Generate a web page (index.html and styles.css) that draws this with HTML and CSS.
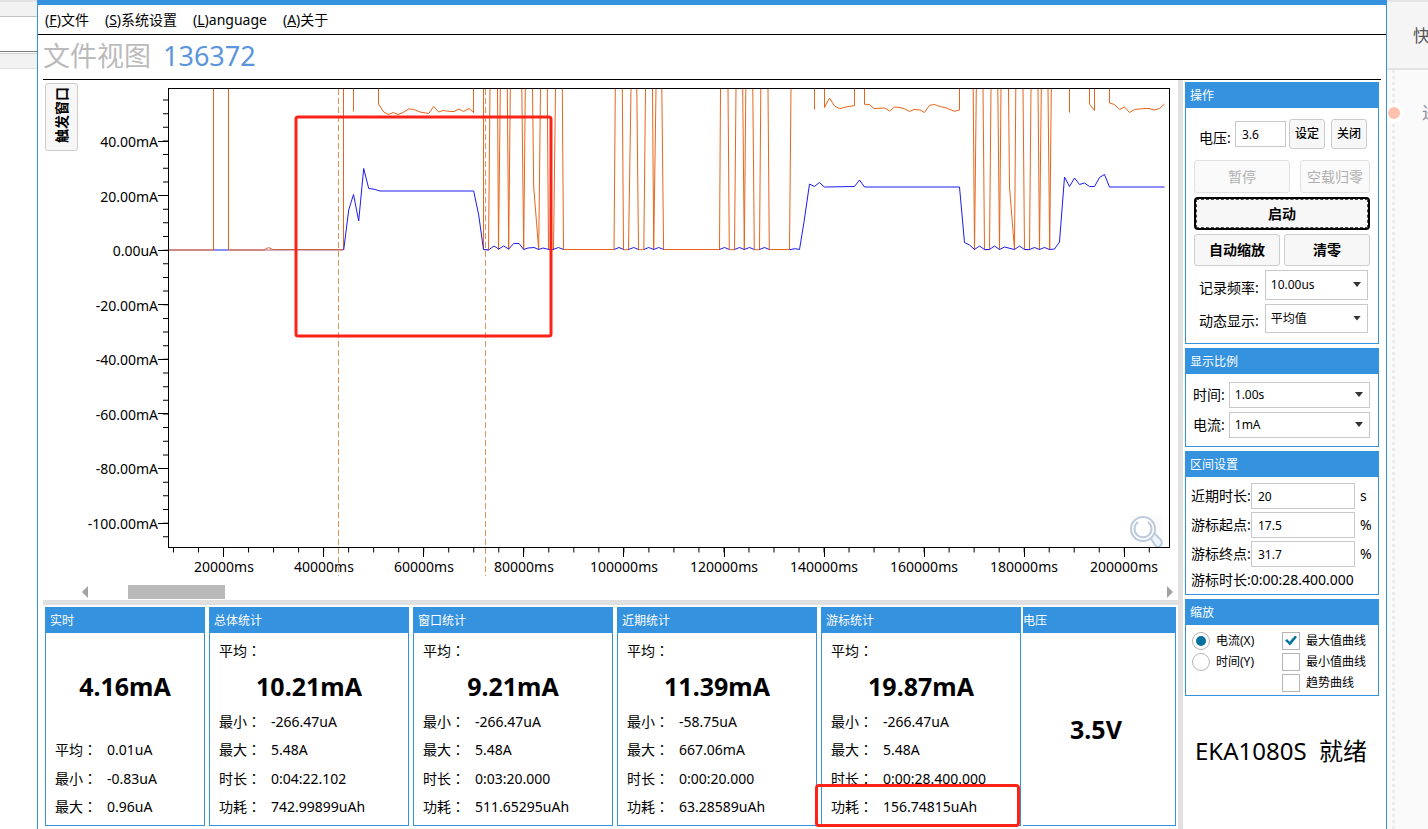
FILE: index.html
```html
<!DOCTYPE html>
<html lang="zh-CN">
<head>
<meta charset="utf-8">
<title>EKA1080S</title>
<link rel="stylesheet" href="styles.css">
</head>
<body>
<div class="desktop">
  <div class="backdrop-left">
    <div class="strip strip-tab"></div>
    <div class="strip strip-field"></div>
    <div class="strip strip-bar"></div>
  </div>

  <div class="window">
    <nav class="menu">
      <a href="#file">(<u>F</u>)文件</a>
      <a href="#settings">(<u>S</u>)系统设置</a>
      <a href="#language">(<u>L</u>)anguage</a>
      <a href="#about">(<u>A</u>)关于</a>
    </nav>

    <div class="content">
      <header class="title"><span class="title-name">文件视图</span><span class="title-id">136372</span></header>
      <div class="columns">
        <main class="main">
          <div class="chart-row">
            <button class="trigger" type="button"><span>触发窗口</span></button>
            <svg class="chart" viewBox="83 80 1095 504">
              <g class="orange">
                <path d="M168 250H213.5V89M228.500 89V250H264L268.500 247.500L273 249.500H343.500V89M353.500 89V111.500M378.500 89V104L383.700 112L388.700 114.500L393.300 112.500L398 114.500L403 112.500L408.500 109L413.500 109.300L420 112L428.700 113.500L433.700 106.500L438.700 112L443 110.500L451 111.500H454L459 109L463.500 111.500L469 108.500L473.500 112.500V89"/>
                <path d="M483.500 89V249.700H488.500L490 89M497.500 89L498.500 249.700L500.300 89M507.300 89L508.700 249.700L510.300 89M521.800 89L523.700 249.700L525.300 89M532.500 89L533.700 187L538.700 249.700L540.500 89M547.300 89L548.500 249.700H553.500L555.500 89M562.300 89L563.500 249.500H614L615.300 89"/>
                <path d="M622.300 89L623.500 249.700H628.500L631 89M636.800 89L638.500 249.700H643.800L645.500 89M652.500 89L653.700 249.700L656 89M661.800 89L663.600 249.500H719.500L720.500 89M728 89L729.300 249.700H734.500L736 89M742.700 89L744.300 249.700L745.800 89M752.800 89L754.300 249.700H759.500L760.800 89M768 89L769.300 249.500H789.500L791 89"/>
                <path d="M814.500 89V109.500M824.500 89V107.500L829.500 98L834.500 106L839.500 108.700L846 107L854.500 105.500V89M864.500 89V104.300L869.500 104.500L874 108.500L885 108L889.500 111L894.500 107L900 107.500L905 109L909.500 111.500L914 109.500L920 110L924.500 112.500L929.500 105.300L934.500 104.500L940 106.500L945 107.500L950 109.500L954.500 111.300L959.500 110V89"/>
                <path d="M973.200 89L974.500 249.700L976.300 89M983 89L984.500 249.700H989.500L991 89M997.800 89L999.500 249.700L1001 89M1008.500 89L1009.500 187L1014.500 249.700L1015.800 89M1023 89L1024.500 249.700H1029.500L1031 89M1038 89L1039.500 249.700L1041.300 89M1048 89L1049.700 249.700L1051.300 89"/>
                <path d="M1069.500 89V112.500M1089.500 89V104L1094.500 110.500V89M1109.500 89V103L1114.500 104.500L1119.500 109.500L1124.500 107L1129.500 112.500L1134.500 109.500L1144 108.500H1149L1154 110L1159.500 108.500L1164.500 104"/>
              </g>
              <path class="base" d="M168 250H213.500M229 250H343"/>
              <path class="blue" d="M213.500 250H228.500M343.700 250L348.700 210L353.500 194.500L358.700 221L363.700 168.500L368.700 188.500L374 189.200L380 191H473.700L478.700 215L483.500 249.500L488.500 250L494 246L498.700 249L503.700 246L508.700 249L513.700 243.500H519L523.700 249.500L528 248L534 247.500L538.700 249.500L543 248L549 249.500H553L558.500 247.500L563.500 249.500M614 249.500L619 247.500L623.500 249.500M628.500 249.500L633.700 247.500L638.500 249.500M643.800 249.500L648.700 247.500L653.700 249.500L658.700 247.500L663.600 249.500M719.500 249.500L724.500 247.500L729.300 249.500M734.500 249.500L739.500 247.500L744.300 249.500L749.500 247.500L754.300 249.500M759.500 249.500L764.500 247.500L769.300 249.500M789.500 249.700L795 248.700L799.500 249.500L804 222L809.500 184L814.300 186.500L819.500 182.500L824.300 187L854.500 186.500L859.500 180L864.500 187H959.500L964.500 242.500L969.500 245L974.500 249.500L979.500 246L984.500 249.500H989.500L994.500 246L999.500 249.500L1004.500 247L1014.500 249.500L1019.500 246L1024.500 249.500H1029.500L1034.500 247.500L1039.500 249.500L1044.500 247.500L1049.500 249.500L1054.500 249L1059.500 242L1064.500 177L1069.500 186.500L1074.500 178L1079.500 184.500L1084.500 183L1089.500 186.500H1094.500L1099.500 177.500L1104.500 174.500L1109.500 187H1164.500"/>
              <g class="lens">
                <rect x="1130" y="516" width="32" height="31" fill="#fbfbfc"/>
                <path d="M1150 537L1154 533L1161 540Q1163 544 1160 546Q1157 548 1155 545Z" fill="#eef5fc" stroke="#bccadb" stroke-width="2"/>
                <circle cx="1143" cy="529" r="12" fill="#fff" stroke="#bccadb" stroke-width="2"/>
                <path d="M1138 522A8.500 8.500 0 1 0 1148 522" fill="none" stroke="#bccadb" stroke-width="2"/>
              </g>
              <rect class="axis" x="168.500" y="88.500" width="1001" height="459"/>
              <g class="axis">
                <path d="M158 141.500H168M158 195.500H168M158 250.500H168M158 304.500H168M158 359.500H168M158 413.500H168M158 468.500H168M158 523.500H168"/>
                <path d="M223.500 548V557M323.500 548V557M423.500 548V557M523.500 548V557M623.500 548V557M724.500 548V557M824.500 548V557M924.500 548V557M1024.500 548V557M1124.500 548V557"/>
                <path class="minor-y" d="M165.500 99.500V541"/>
                <path class="minor-x" d="M173 550H1152"/>
              </g>
              <g class="label-y">
                <text x="158" y="147">40.00mA</text>
                <text x="158" y="202">20.00mA</text>
                <text x="158" y="256">0.00uA</text>
                <text x="158" y="311">-20.00mA</text>
                <text x="158" y="365">-40.00mA</text>
                <text x="158" y="420">-60.00mA</text>
                <text x="158" y="474">-80.00mA</text>
                <text x="158" y="529">-100.00mA</text>
              </g>
              <g class="label-x">
                <text x="224" y="572">20000ms</text>
                <text x="324" y="572">40000ms</text>
                <text x="424" y="572">60000ms</text>
                <text x="524" y="572">80000ms</text>
                <text x="624" y="572">100000ms</text>
                <text x="724" y="572">120000ms</text>
                <text x="824" y="572">140000ms</text>
                <text x="924" y="572">160000ms</text>
                <text x="1024" y="572">180000ms</text>
                <text x="1124" y="572">200000ms</text>
              </g>
              <path class="cursor" d="M338.500 89V576M485.500 89V576"/>
              <rect class="mark" x="296" y="117" width="255" height="219" rx="2"/>
            </svg>
          </div>
          <div class="scroll">
            <svg class="arrow" viewBox="0 0 6 12"><path d="M6 0V12L0 6Z"/></svg>
            <div class="track"><div class="thumb"></div></div>
            <svg class="arrow" viewBox="0 0 6 12"><path d="M0 0V12L6 6Z"/></svg>
          </div>
          <div class="split-h"></div>

          <div class="stats">
            <div class="stats-main">
              <section class="panel stat">
                <h2>实时</h2>
                <div class="stat-body">
                  <div class="big big-tall">4.16mA</div>
                  <dl>
                    <div><dt>平均<i lang="zh-TW">：</i></dt><dd>0.01uA</dd></div>
                    <div><dt>最小<i lang="zh-TW">：</i></dt><dd>-0.83uA</dd></div>
                    <div><dt>最大<i lang="zh-TW">：</i></dt><dd>0.96uA</dd></div>
                  </dl>
                </div>
              </section>
              <section class="panel stat">
                <h2>总体统计</h2>
                <div class="stat-body">
                  <div class="caption">平均<i lang="zh-TW">：</i></div>
                  <div class="big">10.21mA</div>
                  <dl>
                    <div><dt>最小<i lang="zh-TW">：</i></dt><dd>-266.47uA</dd></div>
                    <div><dt>最大<i lang="zh-TW">：</i></dt><dd>5.48A</dd></div>
                    <div><dt>时长<i lang="zh-TW">：</i></dt><dd>0:04:22.102</dd></div>
                    <div><dt>功耗<i lang="zh-TW">：</i></dt><dd>742.99899uAh</dd></div>
                  </dl>
                </div>
              </section>
              <section class="panel stat">
                <h2>窗口统计</h2>
                <div class="stat-body">
                  <div class="caption">平均<i lang="zh-TW">：</i></div>
                  <div class="big">9.21mA</div>
                  <dl>
                    <div><dt>最小<i lang="zh-TW">：</i></dt><dd>-266.47uA</dd></div>
                    <div><dt>最大<i lang="zh-TW">：</i></dt><dd>5.48A</dd></div>
                    <div><dt>时长<i lang="zh-TW">：</i></dt><dd>0:03:20.000</dd></div>
                    <div><dt>功耗<i lang="zh-TW">：</i></dt><dd>511.65295uAh</dd></div>
                  </dl>
                </div>
              </section>
              <section class="panel stat">
                <h2>近期统计</h2>
                <div class="stat-body">
                  <div class="caption">平均<i lang="zh-TW">：</i></div>
                  <div class="big">11.39mA</div>
                  <dl>
                    <div><dt>最小<i lang="zh-TW">：</i></dt><dd>-58.75uA</dd></div>
                    <div><dt>最大<i lang="zh-TW">：</i></dt><dd>667.06mA</dd></div>
                    <div><dt>时长<i lang="zh-TW">：</i></dt><dd>0:00:20.000</dd></div>
                    <div><dt>功耗<i lang="zh-TW">：</i></dt><dd>63.28589uAh</dd></div>
                  </dl>
                </div>
              </section>
              <section class="panel stat">
                <h2>游标统计</h2>
                <div class="stat-body">
                  <div class="caption">平均<i lang="zh-TW">：</i></div>
                  <div class="big">19.87mA</div>
                  <dl>
                    <div><dt>最小<i lang="zh-TW">：</i></dt><dd>-266.47uA</dd></div>
                    <div><dt>最大<i lang="zh-TW">：</i></dt><dd>5.48A</dd></div>
                    <div><dt>时长<i lang="zh-TW">：</i></dt><dd>0:00:28.400.000</dd></div>
                    <div><dt>功耗<i lang="zh-TW">：</i></dt><dd>156.74815uAh</dd></div>
                  </dl>
                </div>
                <div class="highlight"></div>
              </section>
            </div>
            <section class="panel stat voltage">
              <h2>电压</h2>
              <div class="big">3.5V</div>
            </section>
          </div>
        </main>

        <div class="split-v"></div>

        <aside class="side">
          <section class="panel">
            <h2>操作</h2>
            <form class="ops">
              <div class="volt-row">
                <label for="volt">电压:</label>
                <input class="box" id="volt" type="text" value="3.6">
                <button class="small" type="button">设定</button>
                <button class="small" type="button">关闭</button>
              </div>
              <div class="row-pause">
                <button type="button" disabled>暂停</button>
                <button type="button" disabled>空载归零</button>
              </div>
              <button class="start" type="button"><span>启动</span></button>
              <div class="row-pair">
                <button type="button">自动缩放</button>
                <button type="button">清零</button>
              </div>
              <div class="pick pick-tall">
                <label for="rate">记录频率:</label>
                <div class="select"><select id="rate"><option>10.00us</option></select></div>
              </div>
              <div class="pick pick-tall">
                <label for="mode">动态显示:</label>
                <div class="select"><select id="mode"><option>平均值</option></select></div>
              </div>
            </form>
          </section>

          <section class="panel">
            <h2>显示比例</h2>
            <form class="ratio">
              <div class="pick">
                <label for="time">时间:</label>
                <div class="select"><select id="time"><option>1.00s</option></select></div>
              </div>
              <div class="pick">
                <label for="current">电流:</label>
                <div class="select"><select id="current"><option>1mA</option></select></div>
              </div>
            </form>
          </section>

          <section class="panel">
            <h2>区间设置</h2>
            <form class="range">
              <div class="field"><label for="recent">近期时长:</label><input class="box" id="recent" type="text" value="20"><span>s</span></div>
              <div class="field"><label for="from">游标起点:</label><input class="box" id="from" type="text" value="17.5"><span>%</span></div>
              <div class="field"><label for="to">游标终点:</label><input class="box" id="to" type="text" value="31.7"><span>%</span></div>
              <div class="duration">游标时长:0:00:28.400.000</div>
            </form>
          </section>

          <section class="panel">
            <h2>缩放</h2>
            <form class="zoom">
              <div class="choices">
                <label><input type="radio" name="axis" checked>电流(X)</label>
                <label><input type="radio" name="axis">时间(Y)</label>
              </div>
              <div class="choices">
                <label><input type="checkbox" checked>最大值曲线</label>
                <label><input type="checkbox">最小值曲线</label>
                <label><input type="checkbox">趋势曲线</label>
              </div>
            </form>
          </section>

          <div class="status">EKA1080S&nbsp; 就绪</div>
        </aside>
      </div>
    </div>
  </div>

  <div class="backdrop-right">
    <div class="back-head">快</div>
    <div class="back-line"><span class="back-text">进</span><span class="dot"></span></div>
  </div>
</div>
</body>
</html>
```

FILE: styles.css
```css
* {
  box-sizing: border-box;
}

body {
  margin: 0;
  background: #fff;
  color: #000;
  font: 14px/20px "Noto Sans", "Noto Sans CJK SC", sans-serif;
  overflow: hidden;
}

h2,
dl,
dd {
  margin: 0;
}

button,
input,
select {
  font: inherit;
  color: inherit;
}

.desktop {
  display: grid;
  grid-template-columns: 37px minmax(0, 1fr) 41px;
  min-height: 100vh;
}

/* Windows behind the application */
.strip-tab {
  height: 17px;
  background: #f2f2f2;
  border-top: 2px solid #e2e2e2;
  border-bottom: 1px solid #c3c3c3;
}

.strip-field {
  height: 35px;
  border-bottom: 1px solid #7d7d7d;
}

.strip-bar {
  height: 16px;
  margin-top: 1px;
  background: #f2f2f2;
  border-top: 1px solid #d0d0d0;
  border-bottom: 1px solid #e0e0e0;
}

.backdrop-right {
  display: flex;
  flex-direction: column;
  background: #fafafa;
  overflow: hidden;
}

.back-head {
  height: 70px;
  padding: 24px 0 0 26px;
  background: #f5f5f5;
  border-top: 2px solid #e6e6e6;
  border-bottom: 2px solid #e3e3e3;
  color: #555;
  font-size: 17px;
  white-space: nowrap;
}

.back-line {
  position: relative;
  flex: 1;
  margin-left: 5px;
  padding: 33px 0 0 30px;
  background: repeating-linear-gradient(#ebebeb 0 3px, #fafafa 3px 6px) 0 0 / 3px 100% no-repeat;
}

.back-text {
  color: #8c8c9c;
  font-size: 17px;
}

.dot {
  position: absolute;
  top: 33px;
  left: -8px;
  width: 20px;
  height: 20px;
  border: 4px solid #fff;
  border-radius: 50%;
  background: #ffc1ac;
}

/* Application window */
.window {
  display: flex;
  flex-direction: column;
  border: solid #3492df;
  border-width: 5px 1px 0;
  background: #fff;
}

.menu {
  display: flex;
  gap: 16px;
  height: 30px;
  padding: 5px 7px 0;
  border-bottom: 1px solid #000;
}

.menu a {
  color: #000;
  text-decoration: none;
}

.content {
  display: flex;
  flex: 1;
  flex-direction: column;
  padding: 0 5px;
}

.title {
  display: flex;
  align-items: center;
  gap: 12px;
  height: 45px;
  padding-bottom: 2px;
  border-bottom: 1px solid #000;
  font-size: 27px;
}

.title-name {
  color: #bbb;
}

.title-id {
  color: #5b95dc;
}

.columns {
  display: flex;
  flex: 1;
}

.main {
  display: flex;
  flex: 1;
  flex-direction: column;
  min-width: 0;
}

.split-v {
  width: 5px;
  background: #e0e0e0;
}

.split-h {
  height: 5px;
  margin-top: 1px;
  background: #e0e0e0;
}

/* Chart */
.chart-row {
  display: flex;
  align-items: flex-start;
}

.chart {
  display: block;
  flex: 1;
  min-width: 0;
  font-size: 14px;
}

.trigger {
  width: 33px;
  height: 68px;
  margin: 3px 5px 0 2px;
  padding: 0;
}

.trigger span {
  display: inline-block;
  white-space: nowrap;
  writing-mode: vertical-rl;
  transform: rotate(180deg);
  text-orientation: sideways;
}

.orange {
  fill: none;
  stroke: #e8651b;
}

.base {
  stroke: #b0607a;
}

.blue {
  fill: none;
  stroke: #1c1cf0;
}

.axis {
  fill: none;
  stroke: #000;
}

.minor-y {
  stroke-width: 5;
  stroke-dasharray: 1 12.65;
}

.minor-x {
  stroke-width: 5;
  stroke-dasharray: 1 24.02;
}

.label-y {
  text-anchor: end;
}

.label-x {
  text-anchor: middle;
}

.cursor {
  stroke: #dc9558;
  stroke-dasharray: 6 3;
}

.mark {
  fill: none;
  stroke: #fb2317;
  stroke-width: 3;
}

.scroll {
  display: flex;
  align-items: center;
  height: 15px;
  padding: 0 5px 0 39px;
}

.arrow {
  width: 6px;
  height: 12px;
  fill: #a2a2a2;
}

.track {
  flex: 1;
  height: 14px;
  padding-left: 40px;
}

.thumb {
  width: 97px;
  height: 14px;
  background: #b9b9b9;
}

/* Panels */
.panel {
  border: 1px solid #3492df;
  background: #fff;
}

.panel h2 {
  height: 25px;
  padding: 0 4px;
  background: #3492df;
  color: #fff;
  font-size: 12px;
  font-weight: 400;
  line-height: 25px;
}

.stats {
  display: grid;
  grid-template-columns: 976fr 153fr;
  gap: 2px;
  padding: 2px 2px 0;
}

.stats-main {
  display: grid;
  grid-template-columns: 160fr 200fr 200fr 200fr 200fr;
  gap: 4px;
}

.stat {
  position: relative;
  min-width: 0;
}

.stat-body {
  padding: 4px 9px;
}

/* Full-width colon centred in its cell */
.stat i {
  font-family: "Noto Sans CJK TC", sans-serif;
  font-style: normal;
  line-height: 20px;
}

.caption {
  height: 28px;
  line-height: 28px;
}

.big {
  height: 42px;
  font-size: 25px;
  font-weight: 700;
  line-height: 42px;
  text-align: center;
}

.big-tall {
  height: 98px;
  line-height: 98px;
}

.stat dl > div {
  display: flex;
  height: 29px;
  line-height: 29px;
}

.stat dl > div:nth-last-child(even) {
  height: 28px;
}

.stat dt {
  width: 52px;
}

.highlight {
  position: absolute;
  right: 0;
  bottom: -2px;
  left: -7px;
  height: 43px;
  border: 3px solid #fb2317;
  border-radius: 4px;
}

.voltage {
  display: flex;
  flex-direction: column;
  border-left: 0;
}

.voltage h2 {
  padding: 0;
}

.voltage .big {
  display: flex;
  flex: 1;
  align-items: center;
  justify-content: center;
  padding-right: 6px;
}

/* Side column */
.side {
  display: flex;
  flex-direction: column;
  gap: 4px;
  width: 198px;
  padding: 2px 2px 0;
}

button {
  padding: 0;
  border: 1px solid #ccc;
  border-radius: 3px;
  background: #f7f7f7;
  font-weight: 600;
}

button:disabled {
  border-color: #e2e2e2;
  background: #fafafa;
  color: #b0b0b0;
  font-weight: 400;
}

.box {
  width: 100%;
  min-width: 0;
  height: 26px;
  padding: 0 6px;
  border: 1px solid #c9c9c9;
  background: #fff;
  font-size: 12px;
}

.ops {
  display: flex;
  flex-direction: column;
  gap: 4px;
  padding: 11px 8px 10px;
}

.volt-row {
  display: grid;
  grid-template-columns: 33px minmax(0, 1fr) 36px 39px;
  column-gap: 3px;
  align-items: center;
  margin-bottom: 7px;
  padding: 0 3px 0 5px;
}

.volt-row label {
  padding-top: 7px;
}

.volt-row .small:last-child {
  margin-left: 3px;
}

.volt-row .small {
  height: 30px;
  font-size: 12px;
  font-weight: 500;
}

.row-pause {
  display: grid;
  grid-template-columns: 96fr 70fr;
  gap: 10px;
}

.row-pair {
  display: grid;
  grid-template-columns: 1fr 1fr;
  gap: 4px;
}

.row-pause button,
.start {
  height: 33px;
}

.row-pair button {
  height: 32px;
}

.start {
  padding: 0;
  border: 2px solid #000;
  border-radius: 4px;
}

.start span {
  display: block;
  height: 29px;
  border: 1px dashed #444;
  line-height: 27px;
}

.pick {
  display: flex;
  align-items: center;
  gap: 4px;
}

.pick-tall {
  padding: 0 2px 0 5px;
  gap: 6px;
}

.pick-tall label {
  padding-top: 5px;
}

.select {
  position: relative;
  flex: 1;
  min-width: 0;
}

.select::after {
  content: "";
  position: absolute;
  top: 50%;
  right: 7px;
  width: 8px;
  height: 5px;
  margin-top: -3px;
  background: #333;
  clip-path: polygon(0 0, 100% 0, 50% 100%);
  pointer-events: none;
}

select {
  display: block;
  appearance: none;
  width: 100%;
  height: 26px;
  padding: 0 5px;
  border: 1px solid #c9c9c9;
  border-radius: 0;
  background: #fff;
  font-size: 12px;
}

.pick-tall select {
  height: 30px;
}

.ops .pick-tall:last-child select {
  height: 29px;
}

.ratio {
  display: grid;
  gap: 4px;
  padding: 8px 8px 8px 7px;
}

.range {
  display: grid;
  gap: 3px;
  padding: 6px 0 5px 5px;
}

.field {
  display: grid;
  grid-template-columns: 60px minmax(0, 1fr) 23px;
  align-items: center;
}

.field span {
  padding-left: 5px;
}

.field label,
.duration {
  white-space: nowrap;
}

.duration {
  line-height: 19px;
}

.zoom {
  display: grid;
  grid-template-columns: 90px 1fr;
  padding: 6px 0 3px 6px;
  font-size: 12px;
}

.choices {
  display: grid;
  align-content: start;
  gap: 2px;
}

.choices label {
  display: flex;
  align-items: center;
  gap: 6px;
  height: 19px;
  white-space: nowrap;
}

.choices input {
  display: grid;
  place-items: center;
  appearance: none;
  width: 18px;
  height: 18px;
  margin: 0;
  border: 1px solid #b5b5b5;
  background: #fff;
}

.choices input[type="radio"] {
  border-radius: 50%;
}

.choices input[type="radio"]:checked::before {
  content: "";
  width: 10px;
  height: 10px;
  border-radius: 50%;
  background: #04729f;
}

.choices input[type="checkbox"]:checked::before {
  content: "";
  width: 12px;
  height: 10px;
  background: #04729f;
  clip-path: polygon(0 50%, 17% 36%, 38% 62%, 84% 0, 100% 14%, 42% 100%);
}

.status {
  margin-top: 34px;
  padding-left: 10px;
  font-size: 24px;
  line-height: 34px;
  white-space: nowrap;
}
```
